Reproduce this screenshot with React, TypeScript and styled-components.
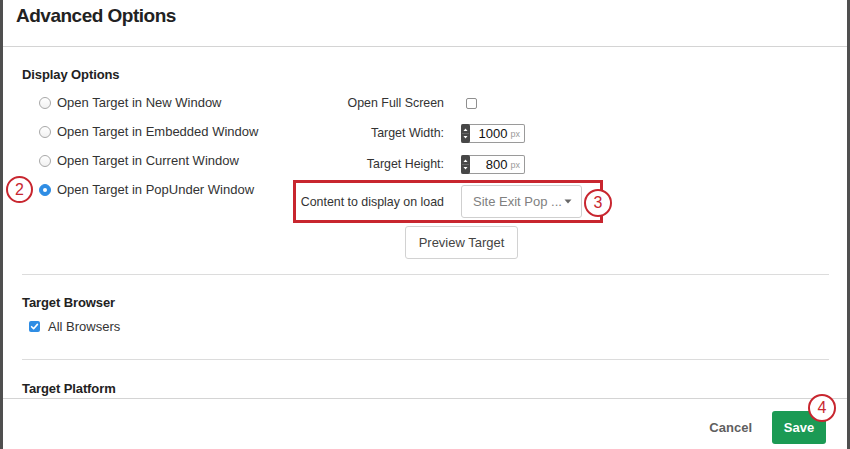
import React from 'react';
import styled, {createGlobalStyle} from 'styled-components';

const RED = '#c8262f';

const GlobalStyle = createGlobalStyle`
  html, body {
    margin: 0;
    padding: 0;
    background: #4f4f4f;
  }
  body {
    font-family: "Liberation Sans", Arial, sans-serif;
    color: #333;
  }
  * {
    box-sizing: border-box;
  }
`;

const radios = [
  {label: 'Open Target in New Window', checked: false},
  {label: 'Open Target in Embedded Window', checked: false},
  {label: 'Open Target in Current Window', checked: false},
  {label: 'Open Target in PopUnder Window', checked: true, marker: '2'},
];

function Spinner() {
  return (
    <svg width="9" height="19" viewBox="0 0 9 19">
      <rect x="0" y="0" width="9" height="19" rx="2" fill="#474747" />
      <path d="M2.5 7 L4.5 4.5 L6.5 7 Z" fill="#fff" />
      <path d="M2.5 12 L4.5 14.5 L6.5 12 Z" fill="#fff" />
      <line x1="1" y1="9.5" x2="8" y2="9.5" stroke="#666" strokeWidth="1" />
    </svg>
  );
}

function NumberField({value}: {value: string}) {
  return (
    <NumberBox>
      <Spinner />
      <NumberValue>{value}</NumberValue>
      <Unit>px</Unit>
    </NumberBox>
  );
}

function CheckMark() {
  return (
    <svg width="11" height="11" viewBox="0 0 11 11">
      <rect x="0" y="0" width="11" height="11" rx="2" fill="#2f8de4" />
      <path d="M2.6 5.7 L4.6 7.7 L8.4 3.4" stroke="#fff" strokeWidth="1.6" fill="none" strokeLinecap="round" strokeLinejoin="round" />
    </svg>
  );
}

export default function App() {
  return (
    <>
      <GlobalStyle />
      <Modal>
        <Header>
          <Title>Advanced Options</Title>
        </Header>

        <Body>
          <SectionTitle>Display Options</SectionTitle>
          <DisplayGrid>
            <RadioList>
              {radios.map(r => (
                <RadioRow key={r.label}>
                  {r.marker && <Marker $left={-33} $top={1}>{r.marker}</Marker>}
                  <Radio $checked={r.checked} />
                  <span>{r.label}</span>
                </RadioRow>
              ))}
            </RadioList>

            <Settings>
              <SettingRow $h={30}>
                <SettingLabel>Open Full Screen</SettingLabel>
                <EmptyBox />
              </SettingRow>
              <SettingRow $h={30}>
                <SettingLabel>Target Width:</SettingLabel>
                <NumberField value="1000" />
              </SettingRow>
              <SettingRow $h={32}>
                <SettingLabel>Target Height:</SettingLabel>
                <NumberField value="800" />
              </SettingRow>
              <SettingRow $h={43} $highlight>
                <SettingLabel>Content to display on load</SettingLabel>
                <SelectBox>
                  <span>Site Exit Pop ...</span>
                  <svg width="8" height="5" viewBox="0 0 8 5">
                    <path d="M0.5 0.5 L7.5 0.5 L4 4.5 Z" fill="#666" />
                  </svg>
                </SelectBox>
                <Marker $right={-12} $top={6} $size={28}>3</Marker>
              </SettingRow>
              <PreviewButton>Preview Target</PreviewButton>
            </Settings>
          </DisplayGrid>

          <Divider />

          <SectionTitle>Target Browser</SectionTitle>
          <CheckRow>
            <CheckMark />
            <span>All Browsers</span>
          </CheckRow>

          <Divider />

          <SectionTitle>Target Platform</SectionTitle>
        </Body>

        <Footer>
          <CancelButton>Cancel</CancelButton>
          <SaveButton>
            Save
            <Marker $left={36} $top={-17} $size={28}>4</Marker>
          </SaveButton>
        </Footer>
      </Modal>
    </>
  );
}

const Modal = styled.div`
  margin-left: 3px;
  width: 844px;
  height: 449px;
  background: #fff;
  display: flex;
  flex-direction: column;
  overflow: hidden;
`;

const Header = styled.div`
  height: 47px;
  flex: 0 0 47px;
  padding: 4px 13px 0;
  border-bottom: 1px solid #d4d4d4;
`;

const Title = styled.h1`
  margin: 0;
  font-size: 19px;
  line-height: 24px;
  font-weight: 700;
  letter-spacing: -0.5px;
  color: #222;
`;

const Body = styled.div`
  flex: 1;
  overflow: hidden;
  padding: 20px 18px 0 19px;
`;

const SectionTitle = styled.h2`
  margin: 0;
  font-size: 13px;
  line-height: 16px;
  font-weight: 700;
  color: #222;
  letter-spacing: -0.1px;
`;

const DisplayGrid = styled.div`
  display: grid;
  grid-template-columns: 254px 310px;
  padding-left: 17px;
  margin-top: 5px;
`;

const RadioList = styled.div`
  display: flex;
  flex-direction: column;
`;

const RadioRow = styled.div`
  position: relative;
  height: 29px;
  display: flex;
  align-items: center;
  gap: 6px;
  font-size: 13px;
  color: #333;
`;

const Radio = styled.span<{$checked?: boolean}>`
  width: 12px;
  height: 12px;
  border-radius: 50%;
  flex: 0 0 12px;
  border: 1px solid ${p => (p.$checked ? '#2f8de4' : '#a8a8a8')};
  background: ${p => (p.$checked ? '#2f8de4' : 'linear-gradient(#fff, #f1f1f1)')};
  display: flex;
  align-items: center;
  justify-content: center;

  &::after {
    content: '';
    width: 4px;
    height: 4px;
    border-radius: 50%;
    background: #fff;
    display: ${p => (p.$checked ? 'block' : 'none')};
  }
`;

const Settings = styled.div`
  display: flex;
  flex-direction: column;
`;

const SettingRow = styled.div<{$h: number; $highlight?: boolean}>`
  position: relative;
  height: ${p => p.$h}px;
  display: grid;
  grid-template-columns: 144px 1fr;
  column-gap: 17px;
  align-items: center;
  padding: 0 ${p => (p.$highlight ? 4 : 7)}px;
  border: ${p => (p.$highlight ? `3px solid ${RED}` : 'none')};
`;

const SettingLabel = styled.span`
  text-align: right;
  font-size: 12.4px;
  color: #333;
  white-space: nowrap;
`;

const EmptyBox = styled.span`
  width: 11px;
  height: 11px;
  margin-left: 5px;
  border: 1px solid #8f8f8f;
  border-radius: 2px;
  background: #fff;
`;

const NumberBox = styled.div`
  width: 64px;
  height: 19px;
  display: flex;
  align-items: center;
  border: 1px solid #9a9a9a;
  border-left: none;
  border-radius: 2px;
  background: #fff;

  svg {
    flex: 0 0 9px;
    margin-top: -1px;
    margin-bottom: -1px;
  }
`;

const NumberValue = styled.span`
  flex: 1;
  text-align: right;
  font-size: 13px;
  color: #111;
`;

const Unit = styled.span`
  font-size: 9px;
  color: #9a9a9a;
  margin: 2px 4px 0 3px;
`;

const SelectBox = styled.div`
  width: 121px;
  height: 33px;
  display: flex;
  align-items: center;
  justify-content: space-between;
  padding: 0 9px 0 11px;
  border: 1px solid #cfcfcf;
  border-radius: 3px;
  background: #fff;
  font-size: 13px;
  color: #808080;
  white-space: nowrap;
`;

const PreviewButton = styled.button`
  margin: 3px 0 0 112px;
  width: 113px;
  height: 33px;
  border: 1px solid #d2d2d2;
  border-radius: 3px;
  background: #fff;
  font-family: inherit;
  font-size: 13px;
  color: #444;
  padding: 0;
`;

const Divider = styled.hr`
  margin: 15px 0 20px;
  border: none;
  border-top: 1px solid #dcdcdc;
  height: 0;

  & + & {
    margin-top: 22px;
  }
`;

const CheckRow = styled.div`
  margin: 4px 0 0 7px;
  height: 22px;
  display: flex;
  align-items: center;
  gap: 8px;
  font-size: 13px;
  color: #333;

  & + ${Divider} {
    margin: 22px 0 21px;
  }
`;

const Footer = styled.div`
  flex: 0 0 51px;
  border-top: 1px solid #d4d4d4;
  display: flex;
  justify-content: flex-end;
  align-items: flex-start;
  padding: 12px 21px 0 0;
`;

const CancelButton = styled.button`
  height: 33px;
  padding: 0 10px;
  margin-right: 10px;
  border: none;
  background: none;
  font-family: inherit;
  font-size: 13px;
  font-weight: 700;
  color: #5f5f5f;
`;

const SaveButton = styled.button`
  position: relative;
  width: 54px;
  height: 33px;
  border: none;
  border-radius: 3px;
  background: #1b9a54;
  color: #fff;
  font-family: inherit;
  font-size: 13px;
  font-weight: 700;
  padding: 0;
`;

const Marker = styled.span<{$left?: number; $right?: number; $top: number; $size?: number}>`
  position: absolute;
  ${p => (p.$left !== undefined ? `left: ${p.$left}px;` : '')}
  ${p => (p.$right !== undefined ? `right: ${p.$right}px;` : '')}
  top: ${p => p.$top}px;
  width: ${p => p.$size ?? 27}px;
  height: ${p => p.$size ?? 27}px;
  border: 2px solid ${RED};
  border-radius: 50%;
  background: #fff;
  color: ${RED};
  font-family: "Liberation Sans", Arial, sans-serif;
  font-size: 16px;
  font-weight: 400;
  line-height: 1;
  display: flex;
  align-items: center;
  justify-content: center;
  z-index: 2;
`;
